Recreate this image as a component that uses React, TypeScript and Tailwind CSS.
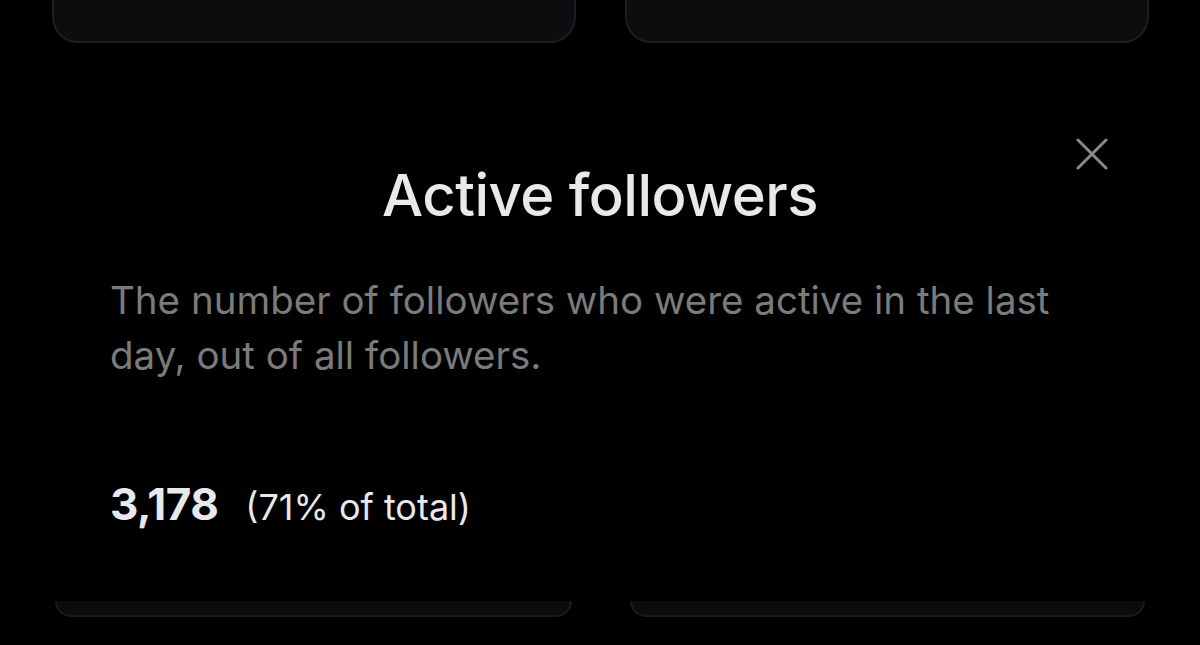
import React from 'react';

const CloseIcon = () => (
  <svg width="32" height="32" viewBox="0 0 32 32" fill="none">
    <path d="M2 2L30 30M30 2L2 30" stroke="#8a8a8a" strokeWidth="3" strokeLinecap="round" />
  </svg>
);

export default function App() {
  return (
    <div className="relative w-full h-[645px] bg-black overflow-hidden font-['Inter','Noto_Sans',sans-serif]">
      {/* cards behind the sheet, top */}
      <div className="flex gap-[49px] pl-[52px] -mt-[60px]">
        <div className="w-[524px] h-[103px] rounded-[26px] bg-[#0c0d0f] border-2 border-[#1c1e21]" />
        <div className="w-[524px] h-[103px] rounded-[26px] bg-[#0c0d0f] border-2 border-[#1c1e21]" />
      </div>

      {/* sheet content */}
      <div className="relative pl-[110px] pr-[120px]">
        <button className="absolute right-[92px] top-[95px] p-0" aria-label="Close">
          <CloseIcon />
        </button>
        <h2 className="pt-[120px] text-center -ml-[110px] -mr-[120px] text-[58px] leading-[64px] font-medium tracking-[-0.5px] text-[#e7e9ea]">
          Active followers
        </h2>
        <p className="mt-[46px] text-[38.5px] leading-[55px] text-[#7b7b7b]">
          The number of followers who were active in the last day, out of all followers.
        </p>
        <div className="mt-[88px] flex items-baseline gap-[27px] text-[#e7e9ea]">
          <span className="text-[44px] font-bold tracking-[-0.5px]">3,178</span>
          <span className="text-[36px]">(71% of total)</span>
        </div>
      </div>

      {/* cards peeking at the bottom */}
      <div className="absolute left-0 top-[601px] flex gap-[58px] pl-[55px]">
        <div className="w-[517px] h-[16px] rounded-b-[22px] bg-[#0b0c0e] border-b-2 border-x-2 border-[#1a1b1e]" />
        <div className="w-[515px] h-[16px] rounded-b-[22px] bg-[#0b0c0e] border-b-2 border-x-2 border-[#1a1b1e]" />
      </div>
    </div>
  );
}
